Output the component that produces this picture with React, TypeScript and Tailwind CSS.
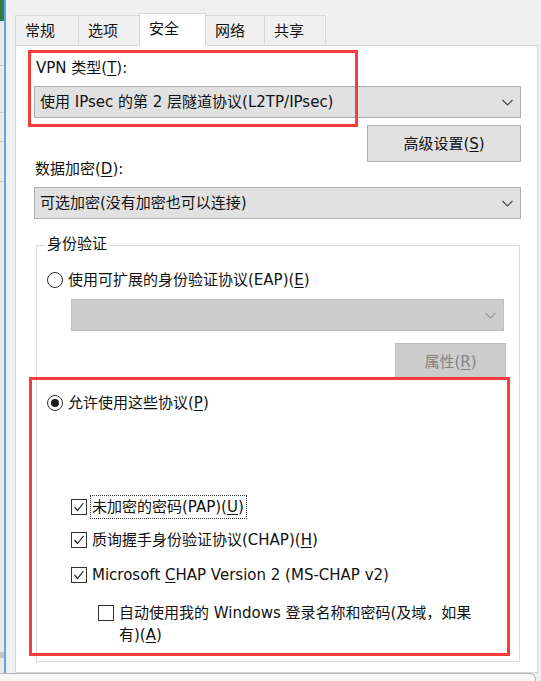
import React from "react";
import clsx from "clsx";

const Chevron: React.FC<{ light?: boolean }> = ({ light }) => (
    <svg width="11" height="7" viewBox="0 0 11 7" className="shrink-0">
        <polyline
            points="0.5,1 5.5,6 10.5,1"
            fill="none"
            stroke={light ? "#9a9a9a" : "#444444"}
            strokeWidth="1.1"
        />
    </svg>
);

const Combo: React.FC<{ text?: string; disabled?: boolean; className?: string }> = ({ text, disabled, className }) => (
    <div
        className={clsx(
            "flex h-[32px] items-center justify-between border pl-[5px] pr-[7px]",
            disabled ? "border-[#bfbfbf] bg-[#cccccc]" : "border-[#adadad] bg-[#e1e1e1]",
            className
        )}
    >
        <span className="whitespace-nowrap">{text}</span>
        <Chevron light={disabled} />
    </div>
);

const Radio: React.FC<{ checked?: boolean }> = ({ checked }) => (
    <span className="flex h-[16px] w-[16px] shrink-0 items-center justify-center rounded-full border border-[#333333] bg-white">
        {checked && <span className="h-[8px] w-[8px] rounded-full bg-[#1a1a1a]" />}
    </span>
);

const Checkbox: React.FC<{ checked?: boolean }> = ({ checked }) => (
    <span className="flex h-[16px] w-[16px] shrink-0 items-center justify-center border border-[#333333] bg-white">
        {checked && (
            <svg width="14" height="14" viewBox="0 0 14 14">
                <polyline points="2.5,7 5.5,10.5 11.5,3" fill="none" stroke="#222222" strokeWidth="1.2" />
            </svg>
        )}
    </span>
);

const tabs = [
    { label: "常规", w: "w-[64px]" },
    { label: "选项", w: "w-[62px]" },
    { label: "安全", w: "w-[67px]", active: true },
    { label: "网络", w: "w-[60px]" },
    { label: "共享", w: "w-[62px]" },
];

const App: React.FC = () => {
    return (
        <div className="relative flex h-[681px] w-[541px] flex-col overflow-hidden bg-[#f0f0f0] font-['DejaVu_Sans','Noto_Sans_CJK_SC',sans-serif] text-[15px] leading-[20px] text-[#111111]">
            <div className="flex h-[673px]">
                {/* left edge of the window behind */}
                <div className="flex w-[4px] flex-col bg-[#e9e9e9]">
                    <div className="h-[21px] bg-[#2f7d45]" />
                    <div className="mt-[44px] h-px bg-[#c8c8c8]" />
                    <div className="mt-[46px] h-px bg-[#c8c8c8]" />
                    <div className="mt-[28px] h-px bg-[#c8c8c8]" />
                    <div className="mt-[39px] h-px bg-[#c8c8c8]" />
                    <div className="mt-[470px] h-[6px] bg-[#c4c4c4]" />
                </div>
                <div className="w-[2px] bg-[#64a3e6]" />

                <div className="flex flex-1 flex-col pl-[9px] pr-[3px] pt-[13px]">
                    {/* Tabs */}
                    <div className="flex h-[32px] items-end">
                        {tabs.map((t, i) => (
                            <div
                                key={t.label}
                                className={clsx(
                                    "flex items-center border-x border-t border-[#d9d9d9] pl-[9px]",
                                    t.w,
                                    i > 0 && "-ml-px",
                                    t.active ? "relative z-10 -mb-px h-[33px] bg-white pb-[3px]" : "h-[30px] bg-[#f0f0f0]"
                                )}
                            >
                                {t.label}
                            </div>
                        ))}
                    </div>

                    {/* Panel */}
                    <div className="flex flex-1 flex-col border border-[#d9d9d9] bg-white pl-[18px] pr-[16px]">
                        <div className="ml-[2px] mt-[12px]">
                            VPN 类型(<u className="underline-offset-2">T</u>):
                        </div>
                        <Combo className="mt-[8px]" text="使用 IPsec 的第 2 层隧道协议(L2TP/IPsec)" />
                        <button className="mt-[7px] h-[37px] w-[154px] self-end border border-[#adadad] bg-[#e1e1e1]">
                            高级设置(<u className="underline-offset-2">S</u>)
                        </button>
                        <div className="-mt-[3px] ml-[1px]">
                            数据加密(<u className="underline-offset-2">D</u>):
                        </div>
                        <Combo className="mt-[8px]" text="可选加密(没有加密也可以连接)" />

                        {/* 身份验证 group */}
                        <div className="relative ml-[2px] mr-[1px] mt-[26px] flex h-[417px] flex-col border border-[#dcdcdc] pl-[10px]">
                            <span className="absolute -top-[12px] left-[8px] bg-white px-[2px]">身份验证</span>

                            <div className="mt-[24px] flex h-[20px] items-center gap-[5px]">
                                <Radio />
                                <span>
                                    使用可扩展的身份验证协议(EAP)(<u className="underline-offset-2">E</u>)
                                </span>
                            </div>
                            <Combo disabled className="ml-[24px] mr-[15px] mt-[9px]" />
                            <button className="mr-[13px] mt-[12px] h-[37px] w-[111px] self-end border border-[#bfbfbf] bg-[#cccccc] text-[#838383]">
                                属性(<u className="underline-offset-2">R</u>)
                            </button>

                            <div className="mt-[13px] flex h-[20px] items-center gap-[5px]">
                                <Radio checked />
                                <span>
                                    允许使用这些协议(<u className="underline-offset-2">P</u>)
                                </span>
                            </div>

                            <div className="ml-[24px] mt-[82px] flex h-[24px] items-center gap-[3px]">
                                <Checkbox checked />
                                <span className="flex h-[24px] items-center border border-dotted border-[#333333] pl-px pr-[2px]">
                                    未加密的密码(PAP)(<u className="underline-offset-2">U</u>)
                                </span>
                            </div>
                            <div className="ml-[24px] mt-[9px] flex h-[24px] items-center gap-[5px]">
                                <Checkbox checked />
                                <span>
                                    质询握手身份验证协议(CHAP)(<u className="underline-offset-2">H</u>)
                                </span>
                            </div>
                            <div className="ml-[24px] mt-[11px] flex h-[24px] items-center gap-[5px]">
                                <Checkbox checked />
                                <span>
                                    Microsoft <u className="underline-offset-2">C</u>HAP Version 2 (MS-CHAP v2)
                                </span>
                            </div>
                            <div className="ml-[51px] mt-[15px] flex items-start gap-[5px] leading-[22px]">
                                <span className="mt-[3px]">
                                    <Checkbox />
                                </span>
                                <span>
                                    自动使用我的 Windows 登录名称和密码(及域，如果
                                    <br />
                                    有)(<u className="underline-offset-2">A</u>)
                                </span>
                            </div>
                        </div>
                    </div>
                </div>
            </div>

            {/* bottom edge */}
            <div className="mr-[5px] h-[8px] rounded-tr-[6px] border-r border-t border-[#b4b4b4] bg-[#f7f7f7]" />

            {/* red annotation boxes */}
            <div className="pointer-events-none absolute left-[28px] top-[50px] h-[77px] w-[330px] border-[3px] border-[#fc3b3b]" />
            <div className="pointer-events-none absolute left-[29px] top-[377px] h-[279px] w-[481px] border-[3px] border-[#fc3b3b]" />
        </div>
    );
};

export default App;
